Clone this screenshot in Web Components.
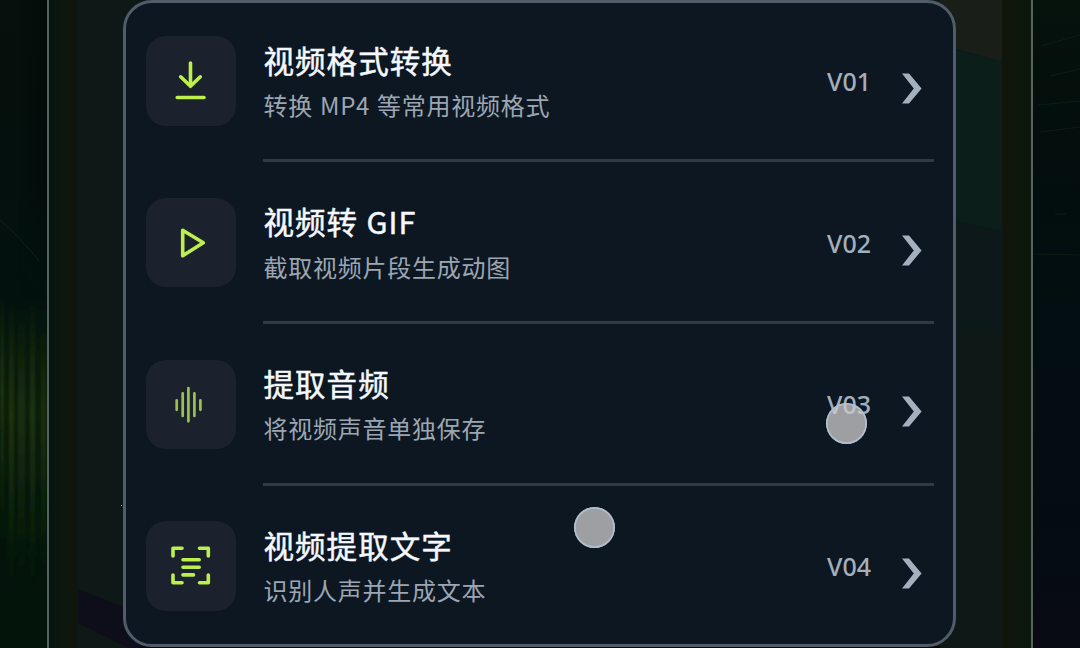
<!DOCTYPE html>
<html lang="zh-CN">
<head>
<meta charset="utf-8">
<title>视频工具</title>
<style>
html,body{margin:0;height:100%;overflow:hidden;background:#020b0a}
body{font-family:"Noto Sans CJK SC","Noto Sans",sans-serif}
</style>
</head>
<body>
<app-stage>
  <tool-card>
    <tool-row icon="download" code="V01"><span slot="title">视频格式转换</span><span slot="desc">转换 MP4 等常用视频格式</span></tool-row>
    <tool-row icon="play" code="V02"><span slot="title">视频转 GIF</span><span slot="desc">截取视频片段生成动图</span></tool-row>
    <tool-row icon="audio" code="V03"><span slot="title">提取音频</span><span slot="desc">将视频声音单独保存</span></tool-row>
    <tool-row icon="scan" code="V04" last><span slot="title">视频提取文字</span><span slot="desc">识别人声并生成文本</span></tool-row>
  </tool-card>
  <touch-dot slot="overlay" style="--x:574px;--y:507px"></touch-dot>
  <touch-dot slot="overlay" style="--x:826px;--y:403px"></touch-dot>
</app-stage>
<script>
const define = (name, html, setup) => customElements.define(name, class extends HTMLElement {
  constructor() {
    super();
    const t = document.createElement('template');
    t.innerHTML = html;
    this.attachShadow({mode: 'open'}).append(t.content.cloneNode(true));
  }
  connectedCallback() { if (setup) setup(this, this.shadowRoot); }
});

define('stage-backdrop', `
<style>:host{position:absolute;inset:0;display:block}svg{display:block}</style>
<svg width="1080" height="648" viewBox="0 0 1080 648">
  <defs>
    <linearGradient id="l" x2="0" y2="1"><stop offset="0" stop-color="#06100c"/><stop offset=".45" stop-color="#03110e"/><stop offset=".6" stop-color="#04140c"/><stop offset="1" stop-color="#03140b"/></linearGradient>
    <linearGradient id="ld"><stop offset="0" stop-color="#000a08" stop-opacity="0"/><stop offset="1" stop-color="#000a08" stop-opacity=".7"/></linearGradient>
    <linearGradient id="ldv" x2="0" y2="1"><stop offset=".6" stop-color="#fff"/><stop offset="1" stop-color="#000"/></linearGradient>
    <mask id="fade"><rect width="48" height="300" fill="url(#ldv)"/></mask>
    <linearGradient id="g" x2="0" y2="1"><stop offset="0" stop-color="#25420f" stop-opacity="0"/><stop offset=".4" stop-color="#253c12" stop-opacity=".7"/><stop offset="1" stop-color="#153010" stop-opacity="0"/></linearGradient>
    <linearGradient id="r" x2="0" y2="1"><stop offset="0" stop-color="#06120c"/><stop offset=".3" stop-color="#020d0d"/><stop offset=".55" stop-color="#030e13"/><stop offset=".8" stop-color="#040c11"/><stop offset="1" stop-color="#080a14"/></linearGradient>
    <linearGradient id="o"><stop offset="0" stop-color="#07130f"/><stop offset=".5" stop-color="#0d170d"/><stop offset="1" stop-color="#10150d"/></linearGradient>
    <linearGradient id="p"><stop offset="0" stop-color="#11150c"/><stop offset="1" stop-color="#0b180b"/></linearGradient>
    <filter id="soft" x="-.5" width="2"><feGaussianBlur stdDeviation="1 3"/></filter>
  </defs>
  <rect width="48" height="648" fill="url(#l)"/>
  <rect x="18" width="30" height="300" fill="url(#ld)" mask="url(#fade)"/>
  <path d="M0 220Q20 237 39 261" fill="none" stroke="#0c2418"/>
  <g fill="url(#g)" filter="url(#soft)">
    <rect y="290" width="48" height="300" opacity=".35"/>
    <rect y="295" width="4" height="240"/><rect x="9" y="300" width="5" height="290"/>
    <rect x="18" y="310" width="7" height="270" opacity=".8"/><rect x="30" y="300" width="5" height="290"/>
    <rect x="41" y="325" width="5" height="250" opacity=".8"/>
  </g>
  <rect x="49" width="29" height="648" fill="url(#o)"/>
  <rect x="78" width="924" height="648" fill="#0e1817"/>
  <path d="M78 589L124 607L160 648H128L78 623Z" fill="#0d0e1a"/>
  <path d="M940 0H1002V62L940 44Z" fill="#191e18"/>
  <path d="M940 46L1002 61V231L940 217Z" fill="#0c1e19"/>
  <path d="M940 218L1002 233V330H940Z" fill="#0c1819"/>
  <rect x="1002" width="29" height="648" fill="url(#p)"/>
  <rect x="1033" width="47" height="648" fill="url(#r)"/>
  <g fill="none" stroke="#102119" opacity=".75"><path d="M1041 46L1080 35M1050 76L1080 69M1038 105L1080 101M1040 132L1080 127M1055 214H1066M1033 254L1080 255"/></g>
  <path d="M47 0h2v648h-2zM1031 0h2v648h-2z" fill="#56625f"/>
  <rect x="121" y="505" width="1" height="1" fill="#8fa0a0"/>
  <rect x="140" y="646" width="800" height="2" fill="#05070a"/>
</svg>`);

define('app-stage', `
<style>
:host{display:flex;justify-content:center;position:relative;width:1080px;height:648px;overflow:hidden}
main{position:relative;display:flex;width:833px;height:647px;margin-right:1px}
</style>
<stage-backdrop></stage-backdrop>
<main><slot></slot></main>
<slot name="overlay"></slot>`);

define('tool-card', `
<style>
:host{display:flex;flex-direction:column;box-sizing:border-box;width:833px;height:647px;border:3px solid #505c69;border-radius:29px;background:#0d1722;padding:0 19.5px 0 20px}
</style><slot></slot>`);

define('touch-dot', `
<style>:host{position:absolute;left:var(--x);top:var(--y);width:41px;height:41px;border-radius:50%;background:rgba(202,202,204,.76);box-shadow:inset 0 0 0 1.7px #b2bed0}</style>`);

const icons = {
  download: '<path d="M44.5 27V50M34.7 40.8L44.5 50.3L54.3 40.8M31.2 61.5H58"/>',
  play: '<path d="M36.7 32.2L57.3 44.8L36.7 57.7Z"/>',
  audio: '<path stroke="#9dc14e" stroke-width="2.7" d="M30.7 40.3V49.8M36.7 33.3V56M42.4 28V61.3M48.4 33.3V56M54.4 40.3V49.8"/>',
  scan: '<path stroke-width="3.6" d="M27 35V27.2H36M53.5 27.2H62.3V35M27 54V61.7H36M53.5 61.7H62.3V54M37 38.8H53.2M37 46.2H53.2M37 53.9H47.5"/>'
};
define('tool-icon', `
<style>:host{display:block;width:89.5px;height:89.5px;border-radius:20px;background:#1b212d}svg{display:block}</style>
<svg width="89.5" height="89.5" viewBox="0 0 89.5 89.5" fill="none" stroke="#bdf04d" stroke-width="3.6" stroke-linecap="round" stroke-linejoin="round"></svg>`,
(el, root) => { root.querySelector('svg').innerHTML = icons[el.getAttribute('name')]; });

define('tool-row', `
<style>
:host{display:grid;grid-template-columns:89.5px 1fr;column-gap:27.5px;height:161.7px;flex:none}
:host([last]) .body{border-color:transparent}
tool-icon{margin-top:33.3px}
.body{display:flex;box-sizing:border-box;height:159.3px;border-bottom:3px solid #303a45;padding-right:12px}
.text{flex:1;padding:33.5px 0 0 .5px;white-space:nowrap}
.title{font-size:30.5px;line-height:46px;letter-spacing:1.05px;word-spacing:.5px;color:#f4f8fc;-webkit-text-stroke:.5px #f4f8fc}
.desc{font-size:24px;line-height:36px;letter-spacing:.75px;word-spacing:.8px;color:#9ca6b2;margin-top:4.5px}
.code{font:500 25px/34px "Noto Sans",sans-serif;color:#a4afbc;width:74.5px;padding-top:61px}
svg{display:block;margin-top:70px}
</style>
<tool-icon></tool-icon>
<div class="body">
  <div class="text"><div class="title"><slot name="title"></slot></div><div class="desc"><slot name="desc"></slot></div></div>
  <div class="code"></div>
  <svg width="20" height="31" viewBox="0 0 20 31"><path fill="#a5b0be" d="M0 .5H7L19.6 15.5L7 30.5H0L11.8 15.5Z"/></svg>
</div>`,
(el, root) => {
  root.querySelector('tool-icon').shadowRoot.querySelector('svg').innerHTML = icons[el.getAttribute('icon')];
  root.querySelector('tool-icon').setAttribute('name', el.getAttribute('icon'));
  root.querySelector('.code').textContent = el.getAttribute('code');
});
</script>
</body>
</html>
